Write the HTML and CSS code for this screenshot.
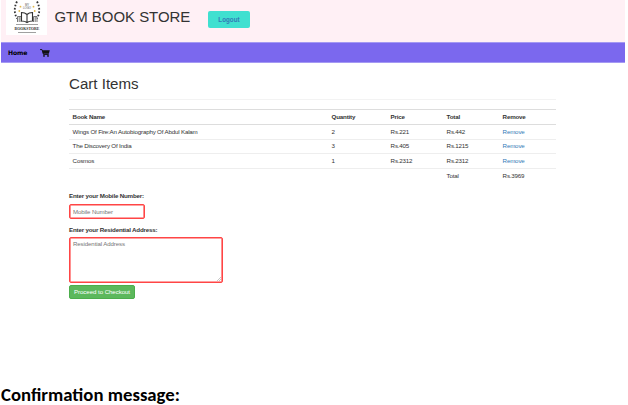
FILE: index.html
```html
<!DOCTYPE html>
<html lang="en">
<head>
<meta charset="utf-8">
<title>GTM Book Store</title>
<link rel="stylesheet" href="styles.css">
</head>
<body>
<div class="page">
  <header class="header">
    <svg class="logo" viewBox="0 0 41 35" role="img" aria-label="Bookstore">
      <rect width="41" height="35" fill="#fff"/>
      <path d="M11 1.500Q6.500 10 11 18.500M31 1.500Q35.500 10 31 18.500" fill="none" stroke="#333" stroke-width="1.800" stroke-dasharray="1.700 1.700"/>
      <g fill="#e3b84b"><circle cx="14.500" cy="6.700" r=".9"/><circle cx="27.500" cy="6.700" r=".9"/><circle cx="13.300" cy="11" r=".9"/><circle cx="28.700" cy="11" r=".9"/></g>
      <text x="21" y="5.500" class="logo-small">MY</text>
      <text x="21" y="8.800" class="logo-small">LOGO</text>
      <path d="M11.500 22V16.500H15V22M31 22V16.500H27.500V22M13.200 17V22M29.200 17V22" fill="none" stroke="#777"/>
      <path d="M15.500 12.500Q19 12.500 21 14.500Q23 12.500 26.500 12.500V21Q23 21 21 22.500Q19 21 15.500 21ZM21 14.500V22.500" fill="#fff" stroke="#333" stroke-width="1.100"/>
      <path d="M10 24.500H32M12 32.500H30" stroke="#777" stroke-width=".7"/>
      <text x="21" y="30" class="logo-name">BOOKSTORE</text>
    </svg>
    <div class="brand">GTM BOOK STORE</div>
    <a class="logout">Logout</a>
  </header>
  <nav class="nav">
    <a class="home">Home</a>
    <svg class="cart" viewBox="0 0 10 8" aria-label="Cart"><path d="M0 .6H2L3.500 5.500H8.700" fill="none" stroke="#111" stroke-width=".9"/><path d="M2 1.200H9.800L8.800 4.800H3Z" fill="#111"/><circle cx="4" cy="6.900" r=".9" fill="#111"/><circle cx="8" cy="6.900" r=".9" fill="#111"/></svg>
  </nav>
  <main class="content">
    <h1 class="title">Cart Items</h1>
    <table class="items">
      <colgroup><col class="c-name"><col class="c-qty"><col class="c-price"><col class="c-total"><col></colgroup>
      <thead><tr><th>Book Name</th><th>Quantity</th><th>Price</th><th>Total</th><th>Remove</th></tr></thead>
      <tbody>
        <tr><td>Wings Of Fire:An Autobiography Of Abdul Kalam</td><td>2</td><td>Rs.221</td><td>Rs.442</td><td><a>Remove</a></td></tr>
        <tr><td>The Discovery Of India</td><td>3</td><td>Rs.405</td><td>Rs.1215</td><td><a>Remove</a></td></tr>
        <tr><td>Cosmos</td><td>1</td><td>Rs.2312</td><td>Rs.2312</td><td><a>Remove</a></td></tr>
        <tr><td></td><td></td><td></td><td>Total</td><td>Rs.3969</td></tr>
      </tbody>
    </table>
    <form class="form">
      <label for="mobile">Enter your Mobile Number:</label>
      <input id="mobile" class="field mobile" placeholder="Mobile Number">
      <label for="address">Enter your Residential Address:</label>
      <div class="area">
        <textarea id="address" class="field address" placeholder="Residential Address"></textarea>
        <svg class="grip" viewBox="0 0 5 5"><path d="M0 5L5 0M2.500 5L5 2.500" stroke="#999" stroke-width=".7"/></svg>
      </div>
      <button class="checkout" type="button">Proceed to Checkout</button>
    </form>
  </main>
</div>
<p class="caption">Confirmation message:</p>
</body>
</html>
```
FILE: styles.css
```css
* { box-sizing: border-box; }
body { margin: 0; height: 405px; overflow: hidden; background: #fff; color: #333; font-family: "Liberation Sans", Arial, sans-serif; font-size: 6.2px; letter-spacing: -.18px; }
.page { width: 624px; height: 384px; margin-left: 1px; }
.header { height: 42px; display: flex; align-items: flex-start; background: #fff0f5; }
.logo { width: 41px; height: 35px; margin-left: 5px; flex: none; letter-spacing: 0; }
.logo-small { font-size: 2.8px; text-anchor: middle; fill: #555; }
.logo-name { font: bold 3.9px "Liberation Serif", serif; text-anchor: middle; fill: #333; }
.brand { width: 161px; padding: 8px 0 0 7.5px; font-size: 14.95px; line-height: 18px; letter-spacing: 0; white-space: nowrap; }
.logout { width: 42px; height: 17px; margin-top: 11px; border-radius: 2px; background: #40e0d0; color: #337ab7; font-size: 6.3px; font-weight: bold; line-height: 17px; text-align: center; letter-spacing: 0; }
.nav { height: 21px; display: flex; align-items: center; padding: 0 0 0 7px; background: #7b68ee; border-top: 1px solid #a499f3; border-bottom: 1px solid #a499f3; color: #000; }
.home { width: 32px; font: bold 6.1px "DejaVu Sans", sans-serif; letter-spacing: -.1px; }
.cart { width: 10px; height: 8px; margin-top: 1px; }
.content { width: 487px; margin-left: 68px; padding-top: 12px; }
.title { margin: 0 0 9px; height: 25px; border-bottom: 1px solid #f3f3f3; font-size: 15.1px; font-weight: normal; line-height: 18px; letter-spacing: 0; }
.items { width: 487px; border-collapse: separate; border-spacing: 0; table-layout: fixed; }
.c-name { width: 259px; }
.c-qty { width: 59px; }
.c-price { width: 56px; }
.c-total { width: 56px; }
.items th, .items td { height: 14.8px; padding: 0 3.6px; border-top: 1px solid #eee; text-align: left; line-height: 8px; white-space: nowrap; }
.items th { border-color: #ddd; }
.items tbody tr:first-child td { border-color: #ddd; }
.items a { color: #337ab7; }
.form { display: flex; flex-direction: column; align-items: flex-start; margin-top: 9px; }
.form label { height: 12px; font-weight: bold; line-height: 8px; }
.field { display: block; margin: 0; border: 1px solid #ff4545; border-radius: 2px; box-shadow: inset 0 0 0 .6px #ff4545; background: #fff; font: 6.1px "Liberation Sans", Arial, sans-serif; letter-spacing: -.1px; padding: 2px 3px; outline: 0; }
.field::placeholder { color: #777; opacity: 1; }
.mobile { width: 76px; height: 15px; margin-bottom: 7px; }
.area { position: relative; margin-top: -1px; }
.address { width: 154px; height: 46px; resize: none; }
.grip { position: absolute; right: 2px; bottom: 2px; width: 4px; height: 4px; }
.checkout { width: 66px; height: 14px; margin-top: 2px; padding: 0; border: 1px solid #4cae4c; border-radius: 2px; background: #5cb85c; color: #fff; font: 6.1px "Liberation Sans", Arial, sans-serif; letter-spacing: -.05px; }
.caption { margin: 0; padding-left: 1px; color: #000; font: bold 18.75px/22px Carlito, Calibri, "Open Sans", sans-serif; letter-spacing: 0; white-space: nowrap; }
```
